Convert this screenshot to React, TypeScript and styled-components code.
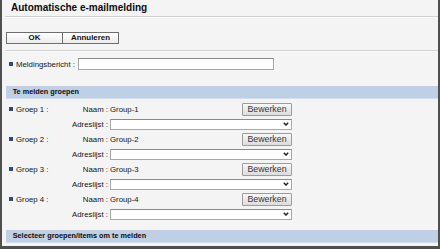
import React from 'react';
import styled, { createGlobalStyle } from 'styled-components';

const GlobalStyle = createGlobalStyle`
  html, body {
    margin: 0;
    padding: 0;
    background: #f4f4f4;
  }
  body {
    font-family: "Liberation Sans", Arial, sans-serif;
  }
`;

const Frame = styled.div`
  width: 440px;
  height: 249px;
  box-sizing: border-box;
  background: #f4f4f4;
  border-left: 2px solid #4f4f4f;
  border-right: 2px solid #4f4f4f;
  border-bottom: 3px solid #4f4f4f;
  overflow: hidden;
  color: #141414;
  font-size: 7.8px;
`;

const Title = styled.h1`
  margin: 0;
  padding-left: 9px;
  height: 16px;
  line-height: 15px;
  font-size: 10px;
  font-weight: bold;
  color: #0c0c0c;
`;

const Divider = styled.div`
  margin-left: 3px;
  height: 0;
  border-top: 1px solid #d0d0d0;
  border-bottom: 1px solid #fbfbfb;
`;

const ButtonBar = styled.div`
  display: flex;
  padding: 14px 0 6px 4px;
`;

const ActionButton = styled.button<{ $w: number }>`
  width: ${p => p.$w}px;
  height: 12px;
  padding: 0;
  margin: 0;
  box-sizing: border-box;
  border: 1px solid #6e6e6e;
  background: linear-gradient(#ffffff, #ececec);
  font-family: "Liberation Sans", Arial, sans-serif;
  font-size: 7.9px;
  font-weight: bold;
  color: #111;
  line-height: 10px;
  & + & {
    margin-left: -1px;
  }
`;

const FieldRow = styled.div`
  display: flex;
  align-items: center;
  padding: 6px 0 0 7px;
  height: 12px;
`;

const Bullet = styled.span`
  display: inline-block;
  width: 3.5px;
  height: 3.5px;
  background: #2b4a7c;
  margin-right: 3.5px;
  flex: none;
`;

const Label = styled.span`
  white-space: nowrap;
`;

const TextInput = styled.input`
  margin: 0 0 0 3px;
  width: 196px;
  height: 12px;
  box-sizing: border-box;
  padding: 0 2px;
  border: 1px solid #a8a8a8;
  border-top-color: #8a8a8a;
  background: #fff;
  font-size: 7.8px;
`;

const SectionBar = styled.div<{ $gap: number }>`
  margin: ${p => p.$gap}px 0 0 4px;
  height: 13px;
  box-sizing: border-box;
  padding-left: 6.7px;
  background: #bfd0e6;
  border-bottom: 1px solid #d4e0ef;
  font-size: 7.3px;
  font-weight: bold;
  color: #0c0c0c;
  line-height: 12px;
`;

const Groups = styled.div`
  padding: 4px 0 0 7px;
`;

const Group = styled.div`
  display: grid;
  grid-template-columns: 62px 37px 184px;
  grid-template-rows: 13px 11px;
  row-gap: 3px;
  margin-bottom: 3px;
  align-items: center;
`;

const GroupName = styled.div`
  display: flex;
  align-items: center;
  white-space: nowrap;
`;

const Key = styled.div`
  text-align: right;
  white-space: nowrap;
`;

const Value = styled.div`
  display: flex;
  align-items: center;
  justify-content: space-between;
  padding-left: 2px;
  height: 100%;
  white-space: nowrap;
`;

const EditButton = styled.button`
  width: 50px;
  height: 13px;
  padding: 0;
  box-sizing: border-box;
  border: 1px solid #9c9c9c;
  border-radius: 1px;
  background: linear-gradient(#f8f8f8, #dcdcdc);
  font-family: "Liberation Sans", Arial, sans-serif;
  font-size: 8.8px;
  color: #363636;
  line-height: 11px;
`;

const SelectWrap = styled.div`
  position: relative;
  height: 11px;
  margin-left: 2px;
`;

const Select = styled.select`
  appearance: none;
  -webkit-appearance: none;
  width: 100%;
  height: 100%;
  box-sizing: border-box;
  margin: 0;
  padding: 0 2px;
  border: 1px solid #a8a8a8;
  border-top-color: #8a8a8a;
  border-radius: 0;
  background: #fff;
  font-size: 7.8px;
`;

const Chevron = styled.svg`
  position: absolute;
  right: 3px;
  top: 3.5px;
  width: 6px;
  height: 4px;
  pointer-events: none;
`;

const groups = [1, 2, 3, 4];

export default function App() {
  return (
    <>
      <GlobalStyle />
      <Frame>
        <Title>Automatische e-mailmelding</Title>
        <Divider />
        <ButtonBar>
          <ActionButton $w={57}>OK</ActionButton>
          <ActionButton $w={57}>Annuleren</ActionButton>
        </ButtonBar>
        <Divider />
        <FieldRow>
          <Bullet />
          <Label>Meldingsbericht :</Label>
          <TextInput type="text" />
        </FieldRow>
        <SectionBar $gap={15.5}>Te melden groepen</SectionBar>
        <Groups>
          {groups.map(n => (
            <Group key={n}>
              <GroupName>
                <Bullet />
                Groep {n} :
              </GroupName>
              <Key>Naam :</Key>
              <Value>
                <span>Group-{n}</span>
                <EditButton>Bewerken</EditButton>
              </Value>
              <div />
              <Key>Adreslijst :</Key>
              <SelectWrap>
                <Select>
                  <option></option>
                </Select>
                <Chevron viewBox="0 0 6 4">
                  <path d="M0.8 0.8 L3 3.1 L5.2 0.8" fill="none" stroke="#222" strokeWidth="1.4" />
                </Chevron>
              </SelectWrap>
            </Group>
          ))}
        </Groups>
        <SectionBar $gap={10}>Selecteer groepen/items om te melden</SectionBar>
      </Frame>
    </>
  );
}
